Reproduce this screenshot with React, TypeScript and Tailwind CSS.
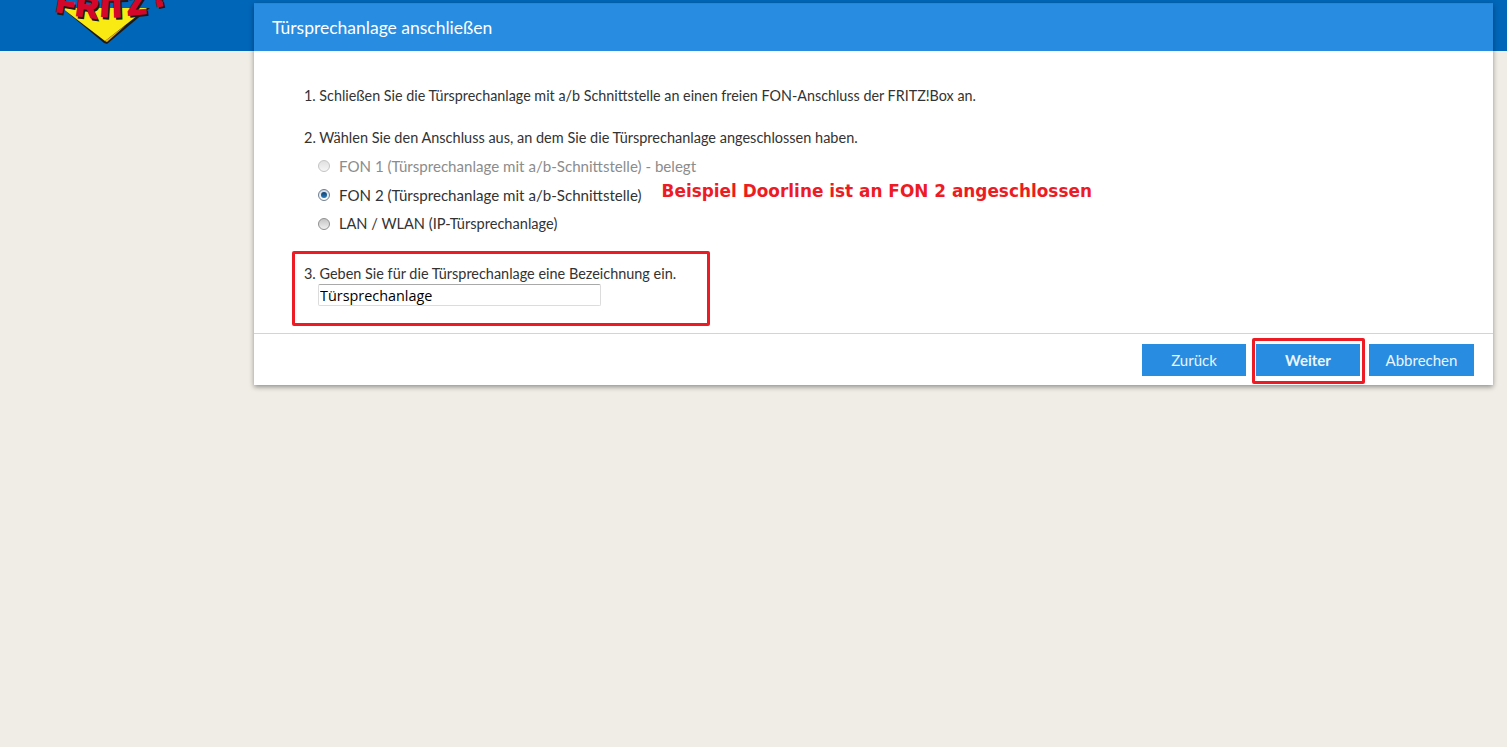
function Radio({ state }: { state: "off" | "on" | "disabled" }) {
  if (state === "on") {
    return (
      <span className="w-[12px] h-[12px] rounded-full border border-[#6f7f8f] bg-gradient-to-b from-[#cfd9e4] to-[#ffffff] flex items-center justify-center shrink-0">
        <span className="w-[6px] h-[6px] rounded-full bg-gradient-to-b from-[#123f6d] to-[#2a7fc4]" />
      </span>
    )
  }
  return (
    <span
      className={
        state === "off"
          ? "w-[12px] h-[12px] rounded-full border border-[#8f8f8f] bg-gradient-to-b from-[#c4c4c4] to-[#f0f0f0] shrink-0"
          : "w-[12px] h-[12px] rounded-full border border-[#c4c4c4] bg-gradient-to-b from-[#e0e0e0] to-[#f6f6f6] shrink-0"
      }
    />
  )
}

const logoLetters = [
  { c: "F", x: 5, y: 11, r: 10 },
  { c: "R", x: 25, y: 15, r: 8 },
  { c: "I", x: 50, y: 16, r: 4 },
  { c: "T", x: 58, y: 17, r: -2 },
  { c: "Z", x: 78, y: 15, r: -6 },
  { c: "!", x: 105, y: 7, r: -12 },
]

function Logo() {
  return (
    <svg width="120" height="46" viewBox="0 0 120 46" className="absolute left-[50px] top-0">
      <polygon points="12,8 100,8 57,44 54,43" fill="#1a1a1a" />
      <polygon points="12,8 97,8 55,41" fill="#f9ea14" />
      <polygon points="72,28 76,25 57,42 55,41" fill="#e9b51c" />
      <g fontFamily="'Liberation Sans', sans-serif" fontWeight="700" fontSize="30">
        {logoLetters.map((l) => (
          <text key={l.c} x={l.x + 2} y={l.y + 2} fill="#1a1a1a" stroke="#1a1a1a" strokeWidth="2" transform={`rotate(${l.r} ${l.x} ${l.y})`}>
            {l.c}
          </text>
        ))}
        {logoLetters.map((l) => (
          <text key={l.c} x={l.x} y={l.y} fill="#d4062a" stroke="#d4062a" strokeWidth="2" transform={`rotate(${l.r} ${l.x} ${l.y})`}>
            {l.c}
          </text>
        ))}
      </g>
    </svg>
  )
}

export default function App() {
  return (
    <div className="relative h-[747px] overflow-hidden bg-[#f0ede6] text-[#333333] font-['Lato','Open_Sans',sans-serif] text-[15px]">
      <header className="relative h-[51px] bg-[#0066b8]">
        <Logo />
      </header>
      <div className="relative ml-[254px] w-[1239px] -mt-[48px] bg-white shadow-[0_2px_5px_rgba(0,0,0,0.4)]">
        <h1 className="h-[48px] pl-[18px] pt-[1px] flex items-center bg-[#288ce0] text-white text-[17.5px] border-t border-[#2a86d4]">
          Türsprechanlage anschließen
        </h1>
        <div className="h-[282px] pl-[50px] pt-[36px]">
          <p className="h-[18px] leading-[18px] text-[14.33px]">1. Schließen Sie die Türsprechanlage mit a/b Schnittstelle an einen freien FON-Anschluss der FRITZ!Box an.</p>
          <p className="h-[18px] leading-[18px] mt-[24px] text-[14.5px]">2. Wählen Sie den Anschluss aus, an dem Sie die Türsprechanlage angeschlossen haben.</p>
          <div className="ml-[14px] mt-[10px] flex flex-col gap-[11px]">
            <label className="flex items-center gap-[9px] h-[18px] text-[#8c8c8c] text-[15.1px]">
              <Radio state="disabled" />
              FON 1 (Türsprechanlage mit a/b-Schnittstelle) - belegt
            </label>
            <label className="flex items-center gap-[9px] h-[18px] text-[15.1px]">
              <Radio state="on" />
              FON 2 (Türsprechanlage mit a/b-Schnittstelle)
              <span className="ml-[11px] -mt-[7px] text-[16.9px] font-bold text-[#ed1c24] font-['DejaVu_Sans',sans-serif]">Beispiel Doorline ist an FON 2 angeschlossen</span>
            </label>
            <label className="flex items-center gap-[9px] h-[18px] text-[14.6px]">
              <Radio state="off" />
              LAN / WLAN (IP-Türsprechanlage)
            </label>
          </div>
          <p className="h-[18px] leading-[18px] mt-[32px] text-[14.45px]">3. Geben Sie für die Türsprechanlage eine Bezeichnung ein.</p>
          <input
            readOnly
            value="Türsprechanlage"
            className="block ml-[14px] mt-[1px] w-[283px] h-[22px] px-[1px] border border-[#dcdcdc] border-t-[#a9a9a9] rounded-[2px] text-[14.4px] text-black font-['Open_Sans',sans-serif] outline-none"
          />
        </div>
        <footer className="h-[52px] border-t border-[#d4d4d4] flex justify-end items-start pt-[10px] pr-[19px] gap-[9px]">
          <button className="w-[104px] h-[32px] mr-[1px] bg-[#288ce0] text-[#eaf4fc]">Zurück</button>
          <button className="w-[104px] h-[32px] bg-[#288ce0] text-[#eaf4fc] font-bold">Weiter</button>
          <button className="w-[105px] h-[32px] bg-[#288ce0] text-[#eaf4fc]">Abbrechen</button>
        </footer>
      </div>
      <div className="absolute left-[292px] top-[251px] w-[418px] h-[75px] border-[3px] border-[#ed1c24] rounded-[2px]" />
      <div className="absolute left-[1252px] top-[338px] w-[113px] h-[46px] border-[3px] border-[#ed1c24] rounded-[2px]" />
    </div>
  )
}
